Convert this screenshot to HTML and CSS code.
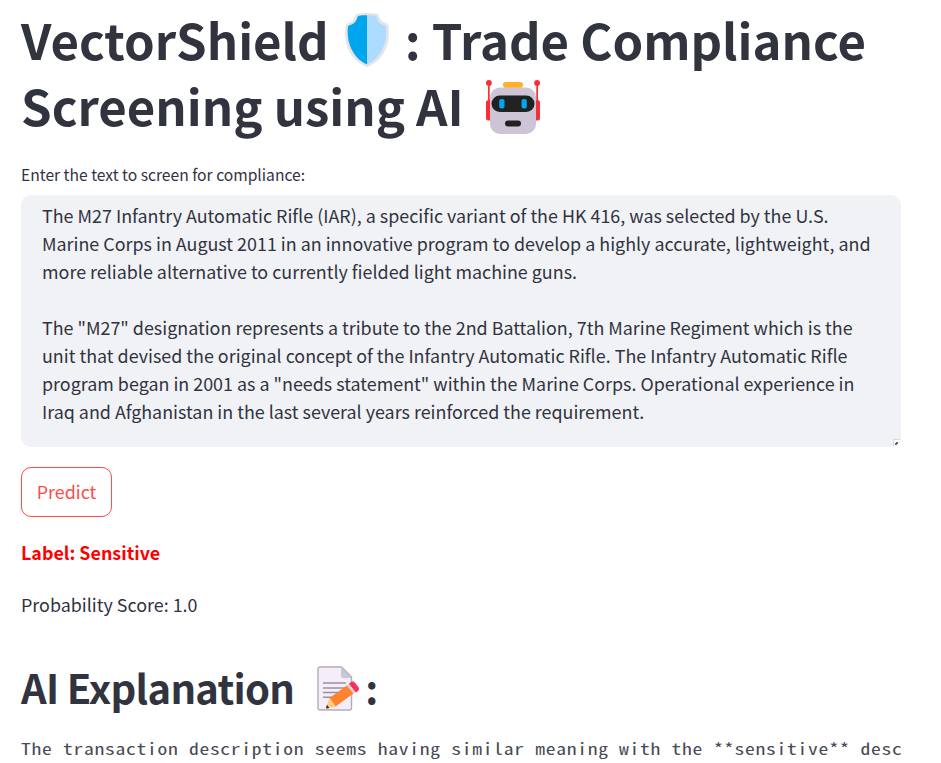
FILE: index.html
```html
<!DOCTYPE html>
<html lang="en">
<head>
<meta charset="utf-8">
<title>VectorShield</title>
<link rel="stylesheet" href="styles.css">
</head>
<body>
<main class="page">
  <h1 class="title"><span>VectorShield</span><svg class="emoji shield" viewBox="1.4 1.4 41.2 51.4" preserveAspectRatio="none" aria-hidden="true"><path d="M22 1.5c3 0 6 .2 9 .7 1.300 .2 2 1 2.300 2.300.8 3.300 2.800 5.500 6.200 6.500 1.500.5 2.300 1.300 2.600 2.800.5 3 .6 7.200.2 11.200-1.300 12.500-8.300 22.500-18.300 27-1.500.7-2.600.7-4 0C10 47.500 3 37.500 1.700 25c-.4-4-.3-8.200.2-11.200.3-1.500 1.100-2.300 2.600-2.800 3.400-1 5.400-3.200 6.200-6.500.3-1.300 1-2.100 2.300-2.300 3-.5 6-.7 9-.7z" fill="#e5e5e8"/><path d="M22 3.600c-3 0-5.500.1-7.600.4-.6.100-1 .4-1.200 1.100-1 4.200-3.700 7-7.500 8-.9.300-1.300.6-1.500 1.500-.4 2.900-.4 6.300 0 9.700C5.500 35.800 12 46 22 50.500z" fill="#00a6ed"/><path d="M22 3.600c3 0 5.500.1 7.600.4.6.100 1 .4 1.200 1.100 1 4.200 3.700 7 7.500 8 .9.300 1.300.6 1.500 1.500.4 2.900.4 6.300 0 9.700C38.500 35.800 32 46 22 50.500z" fill="#aedcff"/></svg><span>: Trade Compliance</span><br><span>Screening using AI</span><svg class="emoji robot" viewBox="0 0 54 54" aria-hidden="true"><g fill="#f92f37"><rect x="2" y="3" width="1.700" height="24"/><rect x="50.300" y="3" width="1.700" height="24"/><circle cx="2.900" cy="3" r="2.900"/><circle cx="51.100" cy="3" r="2.900"/><rect x="0" y="20" width="9" height="20.500" rx="2.500"/><rect x="45" y="20" width="9" height="20.500" rx="2.500"/></g><rect x="4" y="7.500" width="46" height="46.500" rx="10" fill="#cdc4d6"/><rect x="17" y="2" width="20" height="5.700" rx="2.800" fill="#ffb02e"/><rect x="5.500" y="15.500" width="43" height="16.500" rx="8.250" fill="#212121"/><rect x="13.200" y="19" width="5.300" height="9.500" rx="2" fill="#00a6ed"/><rect x="35.500" y="19" width="5.300" height="9.500" rx="2" fill="#00a6ed"/><rect x="19" y="40.500" width="16" height="6" rx="3" fill="#212121"/></svg></h1>
  <div class="caption">Enter the text to screen for compliance:</div>
  <div class="field">
    <div class="field-text">The M27 Infantry Automatic Rifle (IAR), a specific variant of the HK 416, was selected by the U.S.<br>Marine Corps in August 2011 in an innovative program to develop a highly accurate, lightweight, and<br>more reliable alternative to currently fielded light machine guns.<br><br>The "M27" designation represents a tribute to the 2nd Battalion, 7th Marine Regiment which is the<br>unit that devised the original concept of the Infantry Automatic Rifle. The Infantry Automatic Rifle<br>program began in 2001 as a "needs statement" within the Marine Corps. Operational experience in<br>Iraq and Afghanistan in the last several years reinforced the requirement.</div>
    <svg class="grip" viewBox="0 0 8 8" aria-hidden="true"><path d="M0 0h8v8H0z" fill="#fff"/><path d="M0 8V0h8v1H1v7z" fill="#dcdcdc"/><path d="M3 3h2v2H4v1H2V4h1z" fill="#666"/></svg>
  </div>
  <button class="predict" type="button">Predict</button>
  <p class="result">Label: Sensitive</p>
  <p class="score">Probability Score: 1.0</p>
  <h2 class="heading"><span>AI Explanation</span><svg class="emoji memo" viewBox="0 0 42 45" aria-hidden="true"><path d="M3 1h21.500L34.500 11v31a2 2 0 0 1-2 2H3a2 2 0 0 1-2-2V3a2 2 0 0 1 2-2z" fill="#f3eef8" stroke="#b4acbc" stroke-width="1.400"/><path d="M24 1v8.500A2.500 2.500 0 0 0 26.500 12H34.500z" fill="#cdc4d6"/><path d="M6.500 17h22M6.500 22h22M6.500 26.500h17M6.500 31.300h12" stroke="#998ea4" stroke-width="1.500" stroke-linecap="round"/><path d="M12.500 32L30 19.500l6.500 8L18.500 40.500z" fill="#ff822d"/><path d="M12.500 32l6 8.500-7.500 1.800c-1.200.2-2-.7-1.600-1.800z" fill="#ffce7c"/><path d="M10 38.800l2.400 3.200-2 .5c-1 .1-1.500-.5-1.200-1.600z" fill="#402a32"/><path d="M30 19.500l2.800-2 6.500 8-2.800 2z" fill="#d3d3d3"/><path d="M32.500 17.700l1.600-1.200c1.200-.9 2.700-.7 3.600.4l3.400 4.500c.9 1.200.6 2.600-.5 3.500l-1.600 1.100z" fill="#f92f60" stroke="#f92f60"/></svg><span>:</span></h2>
  <div class="code">The transaction description seems having similar meaning with the **sensitive** desc</div>
</main>
</body>
</html>
```
FILE: styles.css
```css
* { box-sizing: border-box; }
body {
  margin: 0;
  background: #fff;
  color: #31333f;
  font-family: "Noto Sans CJK SC", "Noto Sans", sans-serif;
  font-size: 17.900px;
  line-height: 28px;
  overflow: hidden;
}
.page { display: flex; flex-direction: column; width: 880px; margin-left: 21px; padding-top: 6px; }
.title { margin: 0; font-size: 49.100px; line-height: 66px; font-weight: 700; white-space: nowrap; }
.emoji { display: inline-block; }
.shield { width: 44px; height: 54px; margin: -10px 16px -10px 16px; vertical-align: -7px; }
.robot { width: 54px; height: 54px; margin: -10px 0 -10px 22px; vertical-align: -8px; }
.shield, .robot { position: relative; top: -10px; }
.caption { margin-top: 25px; font-size: 15.630px; line-height: 24px; white-space: nowrap; }
.field { position: relative; height: 252px; margin-top: 8px; padding: 6px 21px; background: #f0f2f6; border-radius: 10px; overflow: hidden; }
.field-text { white-space: nowrap; }
.grip { position: absolute; right: 0; bottom: 0; width: 8px; height: 8px; }
.predict { align-self: flex-start; width: 91px; height: 50px; margin-top: 20px; padding: 0 0 2px; border: 1px solid #ff4b4b; border-radius: 10px; background: #fff; color: #ff4b4b; font: inherit; }
.result, .score { margin: 21px 0 0; white-space: nowrap; }
.result { color: #f00; font-weight: 700; }
.score { margin-top: 24px; }
.heading { margin: 42px 0 0; font-size: 40px; line-height: 54px; font-weight: 600; letter-spacing: -0.720px; white-space: nowrap; }
.memo { position: relative; top: -6px; width: 42px; height: 45px; margin: -8px 6px -8px 23px; vertical-align: -5px; }
.code { align-self: flex-start; margin-top: 20px; color: #484a55; font-family: "Noto Sans Mono CJK SC", "Liberation Mono", monospace; font-size: 16.200px; letter-spacing: 0.600px; line-height: 28px; white-space: pre; transform: scaleX(1.207); transform-origin: left; }
```
